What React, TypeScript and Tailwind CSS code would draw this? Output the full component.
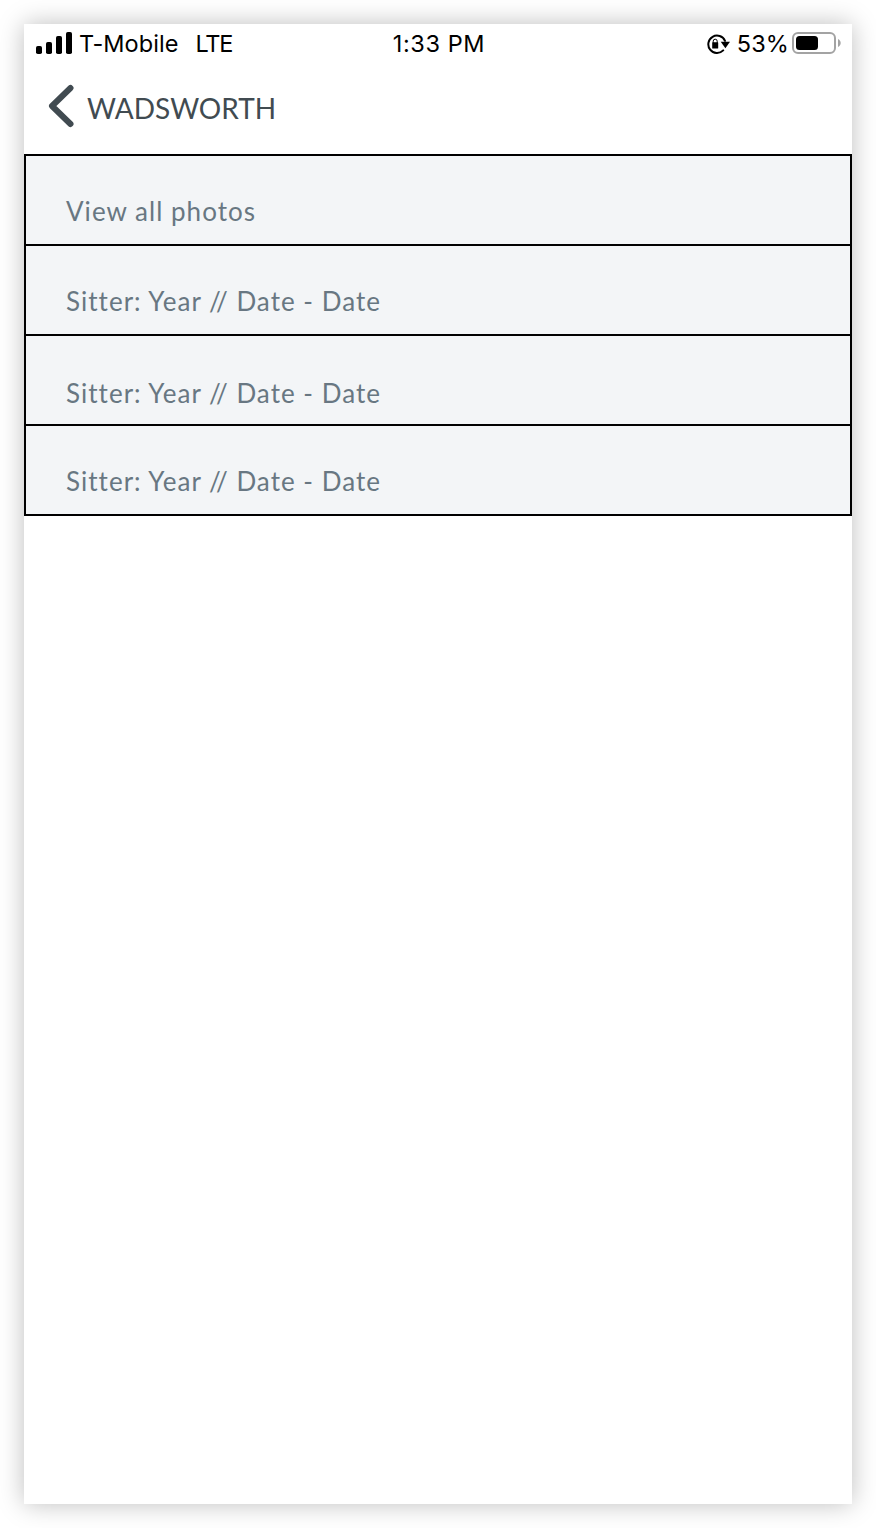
const rows = [
  { label: "View all photos", className: "pt-[37px] tracking-[1.02px]" },
  { label: "Sitter: Year // Date - Date", className: "pt-[37px] tracking-[1.02px]" },
  { label: "Sitter: Year // Date - Date", className: "pt-[39px] tracking-[1.02px]" },
  { label: "Sitter: Year // Date - Date", className: "pt-[37px] tracking-[1.02px]" },
];

function SignalBars() {
  return (
    <svg className="mb-0.5" width="36" height="22" viewBox="0 0 36 22">
      <rect x="0" y="14" width="6" height="8" rx="1.8" />
      <rect x="10" y="10" width="6" height="12" rx="1.8" />
      <rect x="20" y="4" width="6" height="18" rx="1.8" />
      <rect x="30" y="0" width="6" height="22" rx="1.8" />
    </svg>
  );
}

function RotationLock() {
  return (
    <svg width="24" height="22" viewBox="0 0 24 22">
      <path
        d="M18 7.8A8.7 8.7 0 1 0 16.2 17.4"
        fill="none"
        stroke="black"
        strokeWidth="2"
        strokeLinecap="round"
      />
      <path d="M13.7 8.8H23L18.4 15.2Z" />
      <rect x="5.2" y="9.3" width="6" height="6.3" rx="0.6" />
      <path d="M6.2 10V8.2a2 2 0 0 1 4 0V10" fill="none" stroke="black" strokeWidth="1" />
    </svg>
  );
}

function Battery() {
  return (
    <svg className="mb-0.5" width="50" height="22" viewBox="0 0 50 22">
      <rect x="1" y="1" width="42" height="20" rx="5" fill="none" stroke="#a3a3a3" strokeWidth="2" />
      <rect x="4" y="4" width="22" height="14" rx="3.5" />
      <path d="M46 7c3.6 1.4 3.6 6.6 0 8Z" fill="#a3a3a3" />
    </svg>
  );
}

function StatusBar() {
  return (
    <div className="grid h-10 grid-cols-[1fr_auto_1fr] items-center pl-3 pr-[10px] font-['Inter',sans-serif] text-[23.5px] leading-10 text-black">
      <div className="flex items-center">
        <SignalBars />
        <span className="ml-[7px] tracking-[0.05px]">T-Mobile</span>
        <span className="ml-[17px] tracking-[-1.2px]">LTE</span>
      </div>
      <span className="tracking-[0.6px]">1:33 PM</span>
      <div className="flex items-center justify-end">
        <RotationLock />
        <span className="ml-1.5 mr-[3px] tracking-[0.1px]">53%</span>
        <Battery />
      </div>
    </div>
  );
}

export default function App() {
  return (
    <div className="min-h-[1528px] bg-white p-6">
      <div className="h-[1480px] bg-white shadow-[0_0_24px_rgba(0,0,0,0.26)]">
        <StatusBar />
        <header className="flex h-[90px] items-start pl-6 pt-5 text-[#414b51]">
          <svg width="27" height="44" viewBox="0 0 27 44">
            <path
              d="M22.5 4L4 22L22.5 40"
              fill="none"
              stroke="currentColor"
              strokeWidth="6"
              strokeLinecap="round"
              strokeLinejoin="round"
            />
          </svg>
          <h1 className="ml-3 mt-1 font-['Lato',sans-serif] text-[28px] leading-10">WADSWORTH</h1>
        </header>
        <ul className="border-2 border-black bg-[#f3f5f7] font-['Lato',sans-serif] text-[26px] leading-9 text-[#687782]">
          {rows.map((row, i) => (
            <li key={i} className="h-[90px] border-b-2 border-black pl-10 last:h-[88px] last:border-b-0">
              <div className={row.className}>{row.label}</div>
            </li>
          ))}
        </ul>
      </div>
    </div>
  );
}
